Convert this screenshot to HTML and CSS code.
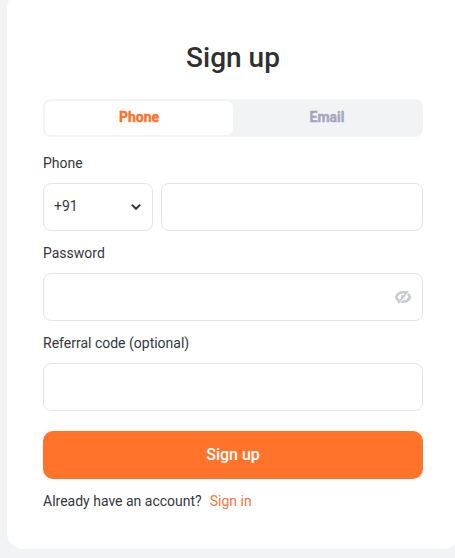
FILE: index.html
```html
<!DOCTYPE html>
<html lang="en">
<head>
<meta charset="utf-8">
<title>Sign up</title>
<link rel="stylesheet" href="styles.css">
</head>
<body>
<main class="card">
  <h1 class="title">Sign up</h1>
  <div class="tabs">
    <button class="tab tab-active" type="button">Phone</button>
    <button class="tab" type="button">Email</button>
  </div>
  <form class="form">
    <div class="field">
      <label class="label" for="phone">Phone</label>
      <div class="phone-row">
        <button class="box code" type="button">
          <span class="code-text">+91</span>
          <svg class="chevron" width="12" height="8" viewBox="0 0 12 8"><path d="M1.8 1.6 6 5.8l4.2-4.2" fill="none" stroke="currentColor" stroke-width="2"/></svg>
        </button>
        <input class="box phone" id="phone" type="tel">
      </div>
    </div>
    <div class="field">
      <label class="label" for="password">Password</label>
      <div class="box password">
        <input class="bare" id="password" type="password">
        <svg class="eye" width="18" height="16" viewBox="0 0 18 16" fill="none" stroke="currentColor">
          <path d="M2 8C3.300 4.900 5.900 3.200 9 3.200S14.700 4.900 16 8C14.700 11.100 12.100 12.800 9 12.800S3.300 11.100 2 8Z" stroke-width="2.600"/>
          <circle cx="9" cy="8" r="2.300" fill="currentColor" stroke="none"/>
          <path d="M5.200 14.200 14.600 3.200" stroke="#fff" stroke-width="1.300"/>
          <path d="M4.200 14.200 14 2" stroke-width="1.700"/>
        </svg>
      </div>
    </div>
    <div class="field">
      <label class="label" for="referral">Referral code (optional)</label>
      <input class="box" id="referral" type="text">
    </div>
    <button class="submit" type="button">Sign up</button>
  </form>
  <p class="footer">Already have an account?<a class="link">Sign in</a></p>
</main>
</body>
</html>
```
FILE: styles.css
```css
* { box-sizing: border-box; }
html { overflow: hidden; background: #f2f3f5; }
body {
  margin: 0;
  height: 558px;
  overflow: hidden;
  background: #f2f3f5;
  color: #33373d;
  font: 14px/20px Roboto, "Liberation Sans", sans-serif;
}
button, input { margin: 0; padding: 0; border: 0; outline: 0; font: inherit; color: inherit; background: none; }
.card {
  width: 452px;
  height: 557px;
  margin: -8px 0 0 7px;
  padding: 48px 36px 0;
  border-radius: 16px;
  background: #fff;
}
.title {
  margin: 0;
  font-size: 28px;
  line-height: 36px;
  font-weight: 500;
  text-align: center;
  color: #303030;
}
.tabs {
  display: flex;
  height: 38px;
  margin-top: 23px;
  padding: 2px;
  border-radius: 8px;
  background: #f2f3f5;
}
.tab {
  flex: 1;
  padding-bottom: 2px;
  border-radius: 6px;
  font-weight: 700;
  color: #a3a7bd;
  -webkit-text-stroke: 0.4px currentColor;
}
.tab-active { background: #fff; color: #ff7029; }
.form { margin-top: 16px; }
.field { margin-bottom: 12px; }
.label { display: block; height: 20px; margin-bottom: 10px; }
.box {
  display: block;
  width: 100%;
  height: 48px;
  border: 1px solid #e5e5e7;
  border-radius: 8px;
  background: #fff;
}
.phone-row { display: flex; gap: 8px; }
.code { display: flex; flex: none; align-items: center; justify-content: space-between; width: 110px; padding: 0 10px; }
.code-text { margin-top: -3px; }
.phone { flex: 1; }
.password { display: flex; align-items: center; padding: 0 10px; }
.bare { flex: 1; }
.eye { color: #c7c9d5; }
.submit {
  display: block;
  width: 100%;
  height: 48px;
  margin-top: 20px;
  border-radius: 10px;
  background: #ff732b;
  color: #fff;
  font-size: 16px;
  font-weight: 500;
}
.footer { margin: 12px 0 0; }
.link { margin-left: 8px; color: #f5743c; }
```
